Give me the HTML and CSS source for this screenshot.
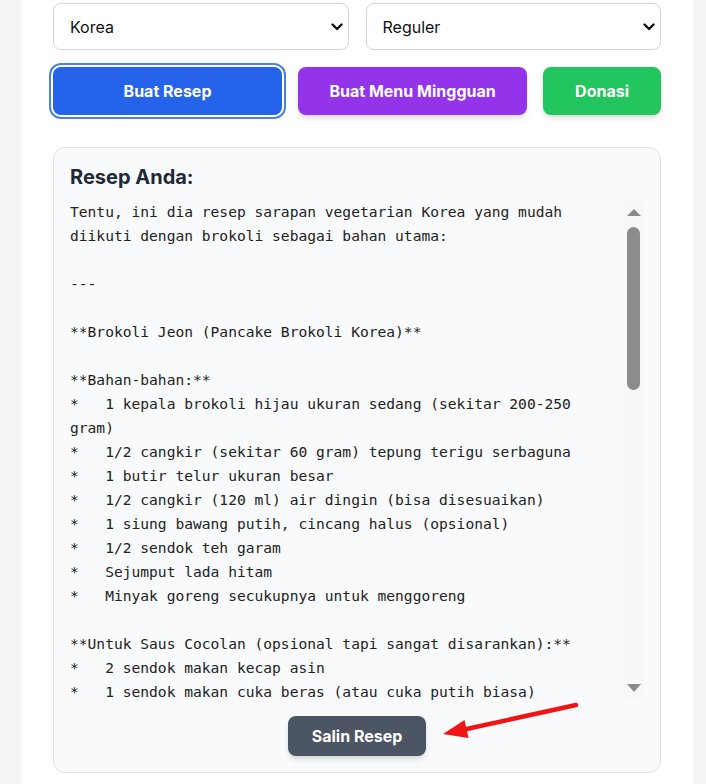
FILE: index.html
```html
<!DOCTYPE html>
<html>

<head>
	<meta charset="utf-8" />
	<title>Resep Sarapan</title>
	<meta name="viewport" content="width=device-width, initial-scale=1" />
	<link rel="stylesheet" href="styles.css">
</head>

<body>
	<main class="page">
		<div class="selects">
			<div class="select">
				<span>Korea</span>
				<svg class="chevron" viewBox="0 0 12 8" width="12" height="8"><path d="M1.5 1.5 L6 6 L10.5 1.5" fill="none" stroke="#111" stroke-width="2.4" stroke-linecap="round" stroke-linejoin="round"/></svg>
			</div>
			<div class="select">
				<span>Reguler</span>
				<svg class="chevron" viewBox="0 0 12 8" width="12" height="8"><path d="M1.5 1.5 L6 6 L10.5 1.5" fill="none" stroke="#111" stroke-width="2.4" stroke-linecap="round" stroke-linejoin="round"/></svg>
			</div>
		</div>

		<div class="actions">
			<button class="btn btn-blue is-focused">Buat Resep</button>
			<button class="btn btn-purple">Buat Menu Mingguan</button>
			<button class="btn btn-green">Donasi</button>
		</div>

		<section class="result">
			<h3 class="result-title">Resep Anda:</h3>
			<div class="output">
				<div class="output-text">Tentu, ini dia resep sarapan vegetarian Korea yang mudah diikuti dengan brokoli sebagai bahan utama:

---

**Brokoli Jeon (Pancake Brokoli Korea)**

**Bahan-bahan:**
*   1 kepala brokoli hijau ukuran sedang (sekitar 200-250 gram)
*   1/2 cangkir (sekitar 60 gram) tepung terigu serbaguna
*   1 butir telur ukuran besar
*   1/2 cangkir (120 ml) air dingin (bisa disesuaikan)
*   1 siung bawang putih, cincang halus (opsional)
*   1/2 sendok teh garam
*   Sejumput lada hitam
*   Minyak goreng secukupnya untuk menggoreng

**Untuk Saus Cocolan (opsional tapi sangat disarankan):**
*   2 sendok makan kecap asin
*   1 sendok makan cuka beras (atau cuka putih biasa)</div>
				<div class="scrollbar">
					<span class="arrow arrow-up"></span>
					<span class="thumb"></span>
					<span class="arrow arrow-down"></span>
				</div>
			</div>
			<div class="copy-row">
				<button class="btn btn-gray">Salin Resep</button>
			</div>

			<!-- annotation pointing at the copy button -->
			<svg class="pointer" width="607" height="626" viewBox="0 0 607 626">
				<line x1="522" y1="558" x2="408" y2="583" stroke="#f01414" stroke-width="4.5" stroke-linecap="round"/>
				<polygon points="389,587 410.5,573 414.5,591" fill="#f01414"/>
			</svg>
		</section>
	</main>
</body>

</html>
```

FILE: styles.css
```css
* {
	box-sizing: border-box;
}

body {
	margin: 0;
	background: #f3f4f6;
	font-family: 'Inter', 'Noto Sans', sans-serif;
}

.page {
	width: 672px;
	min-height: 784px;
	margin-left: 21px;
	padding: 3px 32px 0 32px;
	background: #ffffff;
}

.selects {
	display: grid;
	grid-template-columns: 1fr 1fr;
	gap: 17px;
}

.select {
	display: flex;
	align-items: center;
	justify-content: space-between;
	height: 47px;
	padding: 0 5px 0 16px;
	border: 1px solid #d1d5db;
	border-radius: 8px;
	background: #ffffff;
	font-size: 16px;
	color: #111111;
}

.actions {
	display: flex;
	gap: 16px;
	margin-top: 17px;
}

.btn {
	height: 48px;
	border: none;
	border-radius: 8px;
	font-family: 'Inter', 'Noto Sans', sans-serif;
	font-size: 16px;
	font-weight: 700;
	color: #ffffff;
	box-shadow: 0 4px 6px -1px rgba(0, 0, 0, 0.12), 0 2px 4px -2px rgba(0, 0, 0, 0.1);
}

.btn-blue {
	flex: 1 1 0;
	background: #2563eb;
}

.btn-blue.is-focused {
	box-shadow: 0 0 0 2px #ffffff, 0 0 0 4px #4a85d9;
}

.btn-purple {
	flex: 1 1 0;
	background: #9333ea;
}

.btn-green {
	padding: 0 32px;
	background: #22c55e;
}

.result {
	position: relative;
	margin-top: 32px;
	padding: 15px 16px 16px 16px;
	border: 1px solid #dfe2e6;
	border-radius: 12px;
	background: #f9fafb;
}

.result-title {
	margin: 0 0 9px 0;
	font-size: 20px;
	line-height: 28px;
	font-weight: 700;
	color: #1f2937;
}

.output {
	display: flex;
	height: 500px;
}

.output-text {
	flex: 1;
	overflow: hidden;
	white-space: pre-wrap;
	font-family: 'DejaVu Sans Mono', 'Liberation Mono', monospace;
	font-size: 14.6px;
	line-height: 24px;
	color: #222222;
}

.scrollbar {
	display: flex;
	flex-direction: column;
	align-items: center;
	width: 21px;
	padding: 9px 0 8px 0;
	background: #f7f8f9;
}

.arrow {
	width: 0;
	height: 0;
	border-left: 7.5px solid transparent;
	border-right: 7.5px solid transparent;
}

.arrow-up {
	border-bottom: 7px solid #8a8a8a;
}

.arrow-down {
	margin-top: auto;
	border-top: 8px solid #8a8a8a;
}

.thumb {
	width: 13px;
	height: 163px;
	margin-top: 11px;
	border-radius: 7px;
	background: #8c8c8c;
}

.copy-row {
	display: flex;
	justify-content: center;
	margin-top: 16px;
}

.btn-gray {
	height: 40px;
	padding: 0 24px;
	background: #4b5563;
}

.pointer {
	position: absolute;
	left: 0;
	top: -1px;
	pointer-events: none;
}
```
